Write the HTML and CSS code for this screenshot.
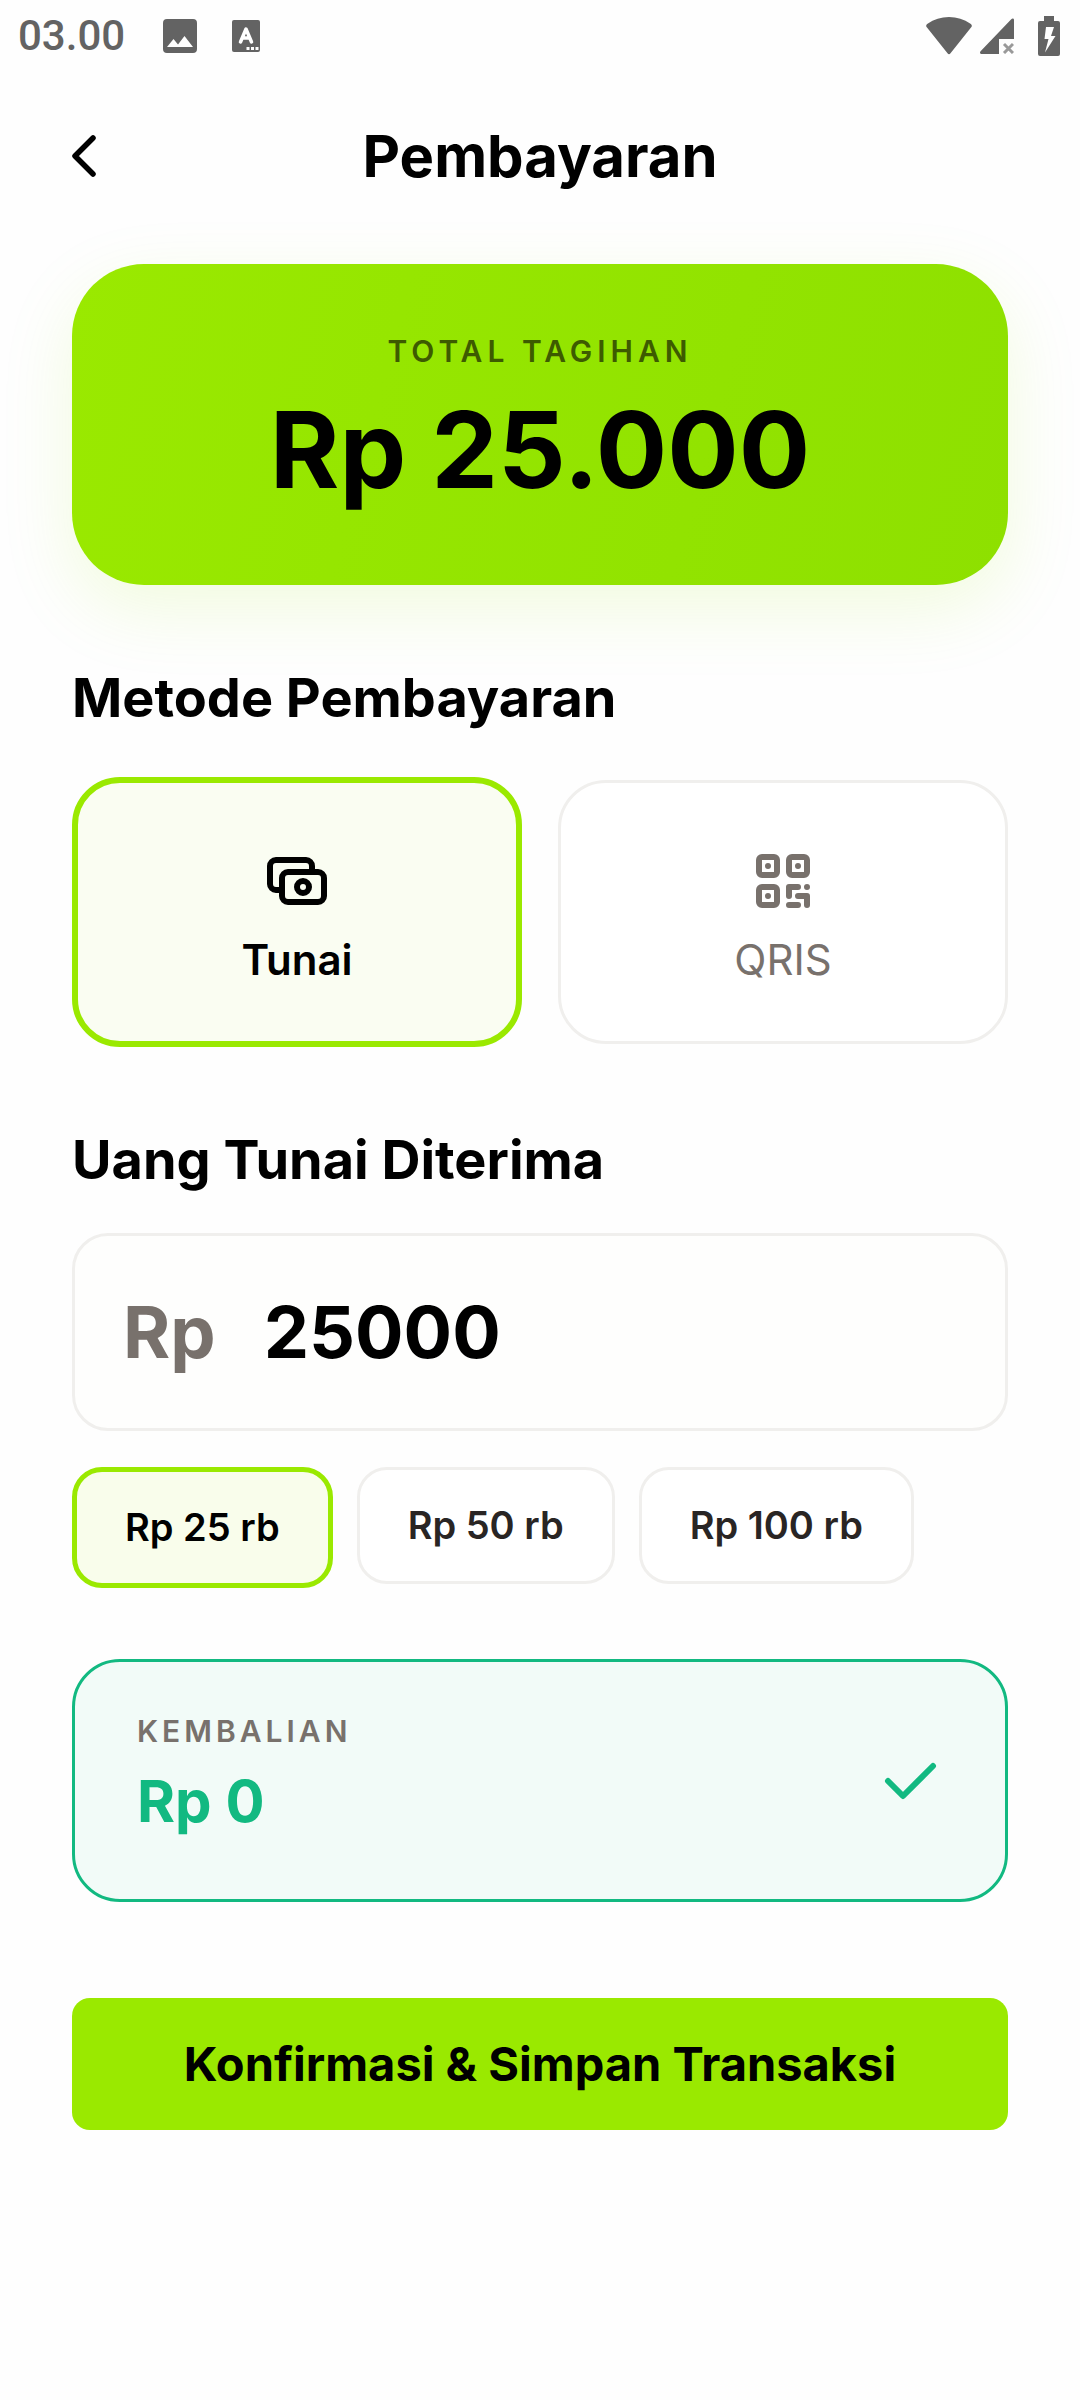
FILE: index.html
```html
<!DOCTYPE html>
<html lang="id">
<head>
<meta charset="utf-8">
<meta name="viewport" content="width=device-width, initial-scale=1">
<title>Pembayaran</title>
<link rel="stylesheet" href="styles.css">
</head>
<body>
<div class="status">
  <span class="status-time">03.00</span>
  <svg class="status-image" width="34" height="34" viewBox="0 0 34 34" aria-hidden="true"><path fill="currentColor" fill-rule="evenodd" d="M4 0h26a4 4 0 0 1 4 4v26a4 4 0 0 1-4 4H4a4 4 0 0 1-4-4V4a4 4 0 0 1 4-4zM4 28h26L21.500 17l-6.500 8.500-4.500-5.500z"/></svg>
  <svg class="status-lang" width="28" height="32" viewBox="0 0 28 32" aria-hidden="true"><rect width="28" height="32" rx="2" fill="currentColor"/><path d="M8.500 22L14 9l5.500 13M10.500 18h7" fill="none" stroke="#fff" stroke-width="3.500" stroke-linecap="round" stroke-linejoin="round"/><path d="M14.500 27h3v3h-3zM19 27h3v3h-3zM23.500 27h3v3h-3z" fill="#fff"/></svg>
  <span class="status-icons">
    <svg width="46" height="38" viewBox="0 0 46 38" aria-hidden="true"><path fill="currentColor" d="M1 10.500C-.3 9-.1 7.800 1.500 6.700 8 2.200 15 0 23 0s15 2.200 21.500 6.700c1.600 1.100 1.800 2.300.5 3.800L24.500 36.300c-1 1.300-2 1.300-3 0z"/></svg>
    <svg class="status-signal" width="34" height="36" viewBox="0 0 34 36" aria-hidden="true"><path fill="currentColor" d="M34 2v19H19v15H2c-2 0-2.700-1.500-1.200-3L31 1.500C32.500 0 34 .5 34 2z"/><path d="M24 26l9 9M33 26l-9 9" stroke="#999" stroke-width="3"/></svg>
    <svg width="22" height="40" viewBox="0 0 22 40" aria-hidden="true"><path fill="currentColor" fill-rule="evenodd" d="M6 0h10v5h4a2 2 0 0 1 2 2v31a2 2 0 0 1-2 2H2a2 2 0 0 1-2-2V7a2 2 0 0 1 2-2h4zM8 11L6.500 23h4L7 36.500 17.500 20h-4.500L16 11z"/></svg>
  </span>
</div>

<main class="page">
  <header class="topbar">
    <button class="back" type="button" aria-label="Kembali"><svg width="24" height="42" viewBox="0 0 24 42" aria-hidden="true"><path d="M21 3L3 21l18 18" fill="none" stroke="currentColor" stroke-width="5.500" stroke-linecap="round" stroke-linejoin="round"/></svg></button>
    <h1 class="title">Pembayaran</h1>
  </header>

  <section class="total">
    <p class="overline overline-total">TOTAL TAGIHAN</p>
    <p class="total-amount">Rp 25.000</p>
  </section>

  <h2 class="heading heading-method">Metode Pembayaran</h2>
  <div class="methods">
    <button class="method method-active" type="button" aria-pressed="true">
      <svg width="72" height="72" viewBox="0 0 24 24" fill="none" stroke="currentColor" stroke-width="2" stroke-linecap="round" stroke-linejoin="round" aria-hidden="true"><rect x="7" y="9" width="14" height="10" rx="2"/><circle cx="14" cy="14" r="2"/><path d="M17 9V7a2 2 0 0 0-2-2H5a2 2 0 0 0-2 2v6a2 2 0 0 0 2 2h2"/></svg>
      <span>Tunai</span>
    </button>
    <button class="method" type="button" aria-pressed="false">
      <svg width="72" height="72" viewBox="0 0 24 24" fill="none" stroke="currentColor" stroke-width="2" stroke-linecap="round" stroke-linejoin="round" aria-hidden="true"><rect x="4" y="4" width="6" height="6" rx="1"/><rect x="14" y="4" width="6" height="6" rx="1"/><rect x="4" y="14" width="6" height="6" rx="1"/><path d="M7 7v.01M17 7v.01M7 17v.01M14 17v-3h3M20 14v.01M17 17h3v3M14 20h3"/></svg>
      <span>QRIS</span>
    </button>
  </div>

  <h2 class="heading heading-cash"><label for="cash">Uang Tunai Diterima</label></h2>
  <div class="field">
    <span class="field-prefix">Rp</span>
    <input class="field-input" id="cash" type="text" inputmode="numeric" value="25000">
  </div>
  <div class="chips">
    <button class="chip chip-active" type="button">Rp 25 rb</button>
    <button class="chip" type="button">Rp 50 rb</button>
    <button class="chip" type="button">Rp 100 rb</button>
  </div>

  <section class="change">
    <div>
      <p class="overline overline-muted">KEMBALIAN</p>
      <p class="change-amount">Rp 0</p>
    </div>
    <svg width="72" height="72" viewBox="0 0 24 24" fill="none" stroke="currentColor" stroke-width="2" stroke-linecap="round" stroke-linejoin="round" aria-hidden="true"><path d="M5 12l5 5L20 7"/></svg>
  </section>

  <button class="confirm" type="button">Konfirmasi &amp; Simpan Transaksi</button>
</main>
</body>
</html>
```

FILE: styles.css
```css
* {
  box-sizing: border-box;
}

body {
  margin: 0;
  background: #fefefe;
  color: #000;
  font-family: Inter, "Liberation Sans", sans-serif;
}

h1, h2, p {
  margin: 0;
}

button, input {
  font: inherit;
  color: inherit;
}

button {
  padding: 0;
  cursor: pointer;
}

svg {
  display: block;
  flex: none;
}

.status {
  display: flex;
  align-items: center;
  height: 72px;
  padding: 0 20px 0 18px;
  color: #636363;
}

.status-time {
  font: 500 42px/48px Roboto, sans-serif;
}

.status-image {
  margin-left: 38px;
}

.status-lang {
  margin-left: 35px;
}

.status-icons {
  display: flex;
  align-items: center;
  margin-left: auto;
}

.status-signal {
  margin: 0 24px 0 8px;
}

.page {
  padding: 0 72px 72px;
}

.topbar {
  display: grid;
  grid-template-columns: 72px 1fr 72px;
  align-items: center;
  height: 168px;
}

.back {
  display: flex;
  align-items: center;
  height: 72px;
  border: 0;
  background: none;
}

.title {
  font-size: 58px;
  line-height: 72px;
  font-weight: 700;
  text-align: center;
}

.total {
  margin-top: 24px;
  padding: 66px 60px 69px;
  border-radius: 72px;
  background: linear-gradient(105deg, #9ae900, #8ee000);
  box-shadow: 0 24px 72px rgba(154, 233, 0, 0.13);
  text-align: center;
}

.overline {
  font-size: 30px;
  line-height: 42px;
  font-weight: 600;
  letter-spacing: 4px;
}

.overline-total {
  letter-spacing: 5px;
  color: #3d5b00;
}

.overline-muted {
  color: #78716c;
}

.total-amount {
  margin-top: 12px;
  font-size: 106px;
  line-height: 132px;
  font-weight: 700;
}

.heading {
  font-size: 54px;
  line-height: 66px;
  font-weight: 700;
}

.heading-method {
  margin-top: 80px;
}

.methods {
  display: grid;
  grid-template-columns: 1fr 1fr;
  align-items: center;
  gap: 36px;
  margin-top: 46px;
}

.method {
  display: flex;
  flex-direction: column;
  align-items: center;
  gap: 16px;
  padding: 62px 0 54px;
  border: 3px solid #f0efed;
  border-radius: 48px;
  background: #fff;
  color: #78716c;
  font-size: 42px;
  line-height: 54px;
}

.method-active {
  border: 6px solid #9ae900;
  background: #fafdf2;
  color: #000;
  font-weight: 600;
}

.heading-cash {
  margin-top: 80px;
}

.field {
  display: flex;
  align-items: center;
  gap: 48px;
  height: 198px;
  margin-top: 40px;
  padding: 0 48px;
  border: 3px solid #f0efed;
  border-radius: 36px;
  background: #fefefd;
  font-size: 72px;
  line-height: 90px;
  font-weight: 700;
}

.field-prefix {
  color: #78716c;
}

.field-input {
  flex: 1;
  min-width: 0;
  padding: 0;
  border: 0;
  outline: 0;
  background: none;
}

.chips {
  display: flex;
  align-items: flex-start;
  gap: 24px;
  margin-top: 36px;
}

.chip {
  padding: 31px 48px 32px;
  border: 3px solid #f0efed;
  border-radius: 30px;
  background: #fff;
  color: #292524;
  font-size: 38px;
  line-height: 48px;
  font-weight: 600;
}

.chip-active {
  border: 5px solid #9ae900;
  background: #f9fdeb;
  color: #000;
}

.change {
  display: flex;
  align-items: center;
  justify-content: space-between;
  margin-top: 71px;
  padding: 48px 60px 48px 62px;
  border: 3px solid #12b981;
  border-radius: 48px;
  background: #f2fbf8;
  color: #12b981;
}

.change-amount {
  margin: 12px 0;
  font-size: 58px;
  line-height: 75px;
  font-weight: 700;
}

.confirm {
  width: 100%;
  margin-top: 96px;
  padding: 36px 0;
  border: 0;
  border-radius: 18px;
  background: #9ae900;
  font-size: 47px;
  line-height: 60px;
  font-weight: 700;
}
```
